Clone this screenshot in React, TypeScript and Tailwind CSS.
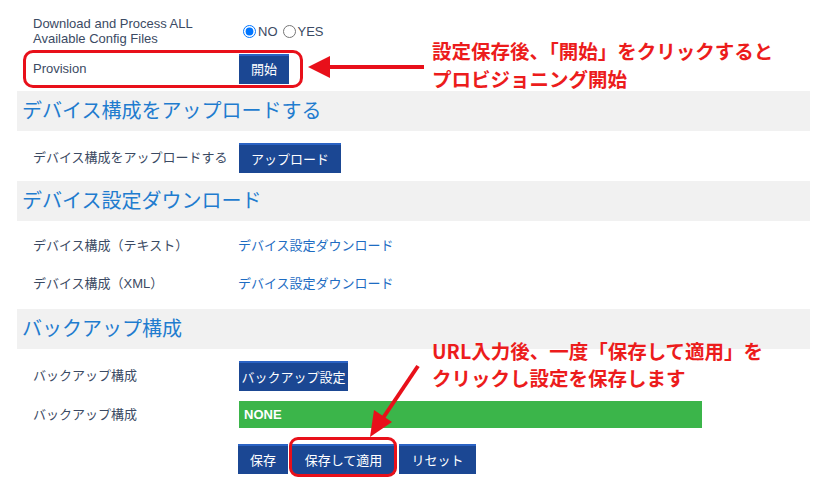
const font = { fontFamily: '"Liberation Sans", "Noto Sans CJK JP", sans-serif' };

function Btn({ children, className = "" }: { children: React.ReactNode; className?: string }) {
  return (
    <button
      className={`h-[30px] bg-[#1b4793] border-t-2 border-[#2b63c4] text-white text-[13px] whitespace-nowrap flex items-center justify-center leading-none ${className}`}
    >
      {children}
    </button>
  );
}

function Band({ title }: { title: string }) {
  return (
    <div className="h-[40px] bg-[#f1f1f1] flex items-center pl-[5px] text-[20px] text-[#1f7ccf]">
      {title}
    </div>
  );
}

function Row({ label, children, className = "h-[38px]" }: { label: string; children?: React.ReactNode; className?: string }) {
  return (
    <div className={`flex items-center ${className}`}>
      <div className="w-[222px] pl-4 text-[13px] text-[#3b4a63] shrink-0">{label}</div>
      <div className="flex items-center">{children}</div>
    </div>
  );
}

export default function App() {
  return (
    <div className="relative w-[838px] h-[485px] bg-white overflow-hidden" style={font}>
      <div className="w-[793px] ml-[17px] pt-[14px]">
        <div className="flex items-center h-[32px]">
          <div className="w-[222px] pl-4 text-[13px] leading-[15px] text-[#3b4a63] pt-[2px]">
            Download and Process ALL
            <br />
            Available Config Files
          </div>
          <label className="flex items-center text-[13px] text-[#3b4a63] mt-[3px]">
            <input type="radio" name="dl" defaultChecked className="m-0 ml-[4px] mr-[2px] w-[13px] h-[13px]" />
            NO
            <input type="radio" name="dl" className="m-0 ml-[5px] mr-[2px] w-[13px] h-[13px]" />
            YES
          </label>
        </div>

        <Row label="Provision" className="h-[45px]">
          <Btn className="w-[50px] h-[29px]">開始</Btn>
        </Row>

        <Band title="デバイス構成をアップロードする" />
        <Row label="デバイス構成をアップロードする" className="h-[50px] pt-[4px]">
          <Btn className="w-[102px]">アップロード</Btn>
        </Row>

        <Band title="デバイス設定ダウンロード" />
        <div className="py-[6px]">
          <Row label="デバイス構成（テキスト）">
            <a className="text-[13px] text-[#1e6cc2] -ml-[1px]">デバイス設定ダウンロード</a>
          </Row>
          <Row label="デバイス構成（XML）">
            <a className="text-[13px] text-[#1e6cc2] -ml-[1px]">デバイス設定ダウンロード</a>
          </Row>
        </div>

        <Band title="バックアップ構成" />
        <div className="pt-[12px] flex flex-col gap-[10px]">
          <Row label="バックアップ構成" className="h-[30px]">
            <Btn className="w-[109px]">バックアップ設定</Btn>
          </Row>
          <Row label="バックアップ構成" className="h-[27px]">
            <div className="w-[463px] h-[27px] bg-[#3bb54a] text-white text-[13px] flex items-center pl-[5px] font-bold">
              NONE
            </div>
          </Row>
          <div className="flex gap-[4px] pl-[221px] mt-[6px]">
            <Btn className="w-[50px] h-[29px]">保存</Btn>
            <Btn className="w-[103px] h-[29px]">保存して適用</Btn>
            <Btn className="w-[77px] h-[29px]">リセット</Btn>
          </div>
        </div>
      </div>

      {/* annotation boxes */}
      <div className="absolute left-[23px] top-[50px] w-[280px] h-[38px] border-[3px] border-[#e8101a] rounded-[10px]" />
      <div className="absolute left-[289px] top-[437px] w-[108px] h-[40px] border-[3px] border-[#e8101a] rounded-[9px]" />

      <svg className="absolute left-0 top-0" width="838" height="485">
        <line x1="326" y1="67" x2="424" y2="67" stroke="#e8101a" strokeWidth="4" />
        <polygon points="308,67 330,56 330,78" fill="#e8101a" />
        <line x1="418" y1="366" x2="381" y2="421" stroke="#e8101a" strokeWidth="4" />
        <polygon points="370,437 374,410 392,422" fill="#e8101a" />
      </svg>

      <div
        className="absolute left-[432px] top-[37px] text-[19.5px] leading-[28px] font-bold text-[#ec1c1c] whitespace-nowrap"
        style={{ fontFamily: '"Noto Sans CJK JP", sans-serif' }}
      >
        設定保存後、「開始」をクリックすると
        <br />
        プロビジョニング開始
      </div>
      <div
        className="absolute left-[432px] top-[337px] text-[19.5px] leading-[27px] font-bold text-[#ec1c1c] whitespace-nowrap"
        style={{ fontFamily: '"Noto Sans CJK JP", sans-serif' }}
      >
        URL入力後、一度「保存して適用」を
        <br />
        クリックし設定を保存します
      </div>
    </div>
  );
}
